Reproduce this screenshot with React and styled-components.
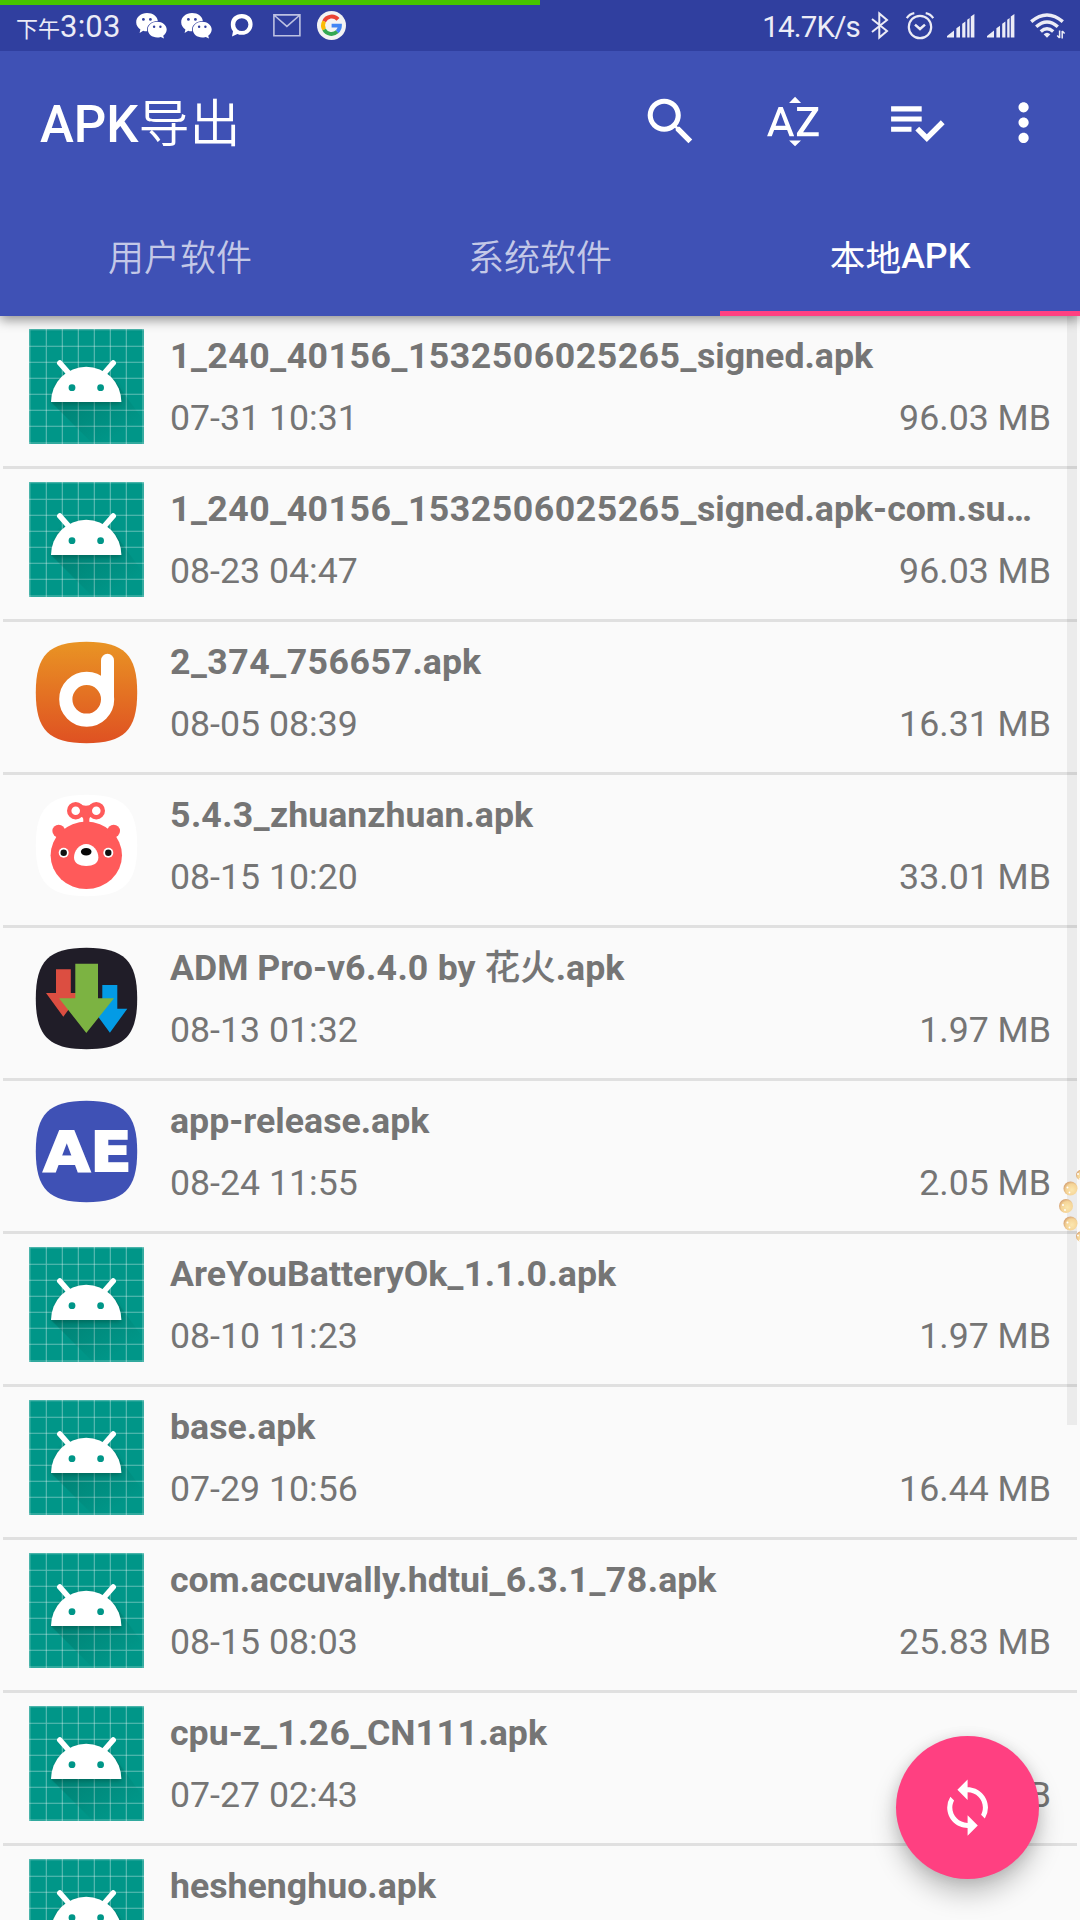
import React from "react";
import styled, { createGlobalStyle } from "styled-components";
import { MdSearch, MdSortByAlpha, MdMoreVert, MdLoop } from "react-icons/md";

const GlobalStyle = createGlobalStyle`
  * { box-sizing: border-box; }
  html, body { margin: 0; padding: 0; background: #fafafa; }
  body { overflow: hidden; }
`;

const Screen = styled.div`
  position: relative;
  width: 1080px;
  height: 1920px;
  overflow: hidden;
  background: #fafafa;
  color: #757575;
  font-family: Roboto, "Noto Sans CJK SC", sans-serif;
  display: flex;
  flex-direction: column;
`;

const Header = styled.header`
  position: relative;
  z-index: 1;
  flex: none;
  background: #3f51b5;
  color: #fff;
  box-shadow: 0 4px 11px rgba(0, 0, 0, 0.42);
`;

const StatusBar = styled.div`
  height: 51px;
  padding: 0 15px 0 16px;
  background: #303f9f;
  color: #ececf6;
  display: flex;
  justify-content: space-between;
`;

const DownloadProgress = styled.div`
  position: absolute;
  top: 0;
  left: 0;
  width: 540px;
  height: 5px;
  background: #46c300;
`;

const StatusGroup = styled.div`
  display: flex;
  align-items: center;
  height: 51px;
`;

const StatusIcon = styled.svg`
  display: block;
  flex: none;
  width: ${(p) => p.$w}px;
  height: ${(p) => p.$h || 28}px;
  margin-left: ${(p) => p.$gap}px;
  overflow: visible;
`;

const Clock = styled.div`
  width: 106px;
  display: flex;
  align-items: baseline;
  font-size: 31px;
  line-height: 36px;
  letter-spacing: 0.2px;
  margin-top: 2px;
  white-space: nowrap;
`;

const Meridiem = styled.span`
  font-family: "Noto Sans CJK SC", sans-serif;
  font-size: 22px;
  font-weight: 400;
  letter-spacing: 0;
`;

const NetSpeed = styled.div`
  font-size: 29.5px;
  line-height: 36px;
  margin-top: 2px;
  letter-spacing: -0.8px;
`;

const Toolbar = styled.div`
  height: 143px;
  padding: 0 10px 0 40px;
  display: flex;
  align-items: center;
`;

const Title = styled.h1`
  flex: 1;
  margin: 0;
  padding-top: 4px;
  font-size: 51px;
  line-height: 60px;
  font-weight: 500;
  white-space: nowrap;
`;

const Han = styled.span`
  font-family: "Noto Sans CJK SC", sans-serif;
  font-weight: ${(p) => p.$weight || 400};
  line-height: 1;
`;

const Actions = styled.div`
  display: flex;
  align-items: center;
`;

const Action = styled.button`
  width: ${(p) => p.$w || 123}px;
  height: 122px;
  padding: 0;
  border: 0;
  background: none;
  color: #fff;
  display: flex;
  align-items: center;
  justify-content: center;
  svg { width: 61.2px; height: 61.2px; flex: none; margin-bottom: ${(p) => p.$lift || 0}px; }
`;

const Tabs = styled.nav`
  height: 122px;
  display: grid;
  grid-template-columns: repeat(3, 1fr);
`;

const Tab = styled.div`
  display: flex;
  align-items: center;
  justify-content: center;
  padding-top: ${(p) => (p.$active ? 7 : 0)}px;
  padding-bottom: ${(p) => (p.$active ? 0 : 1)}px;
  border-bottom: ${(p) => (p.$active ? "5px solid #ff4081" : "0")};
  color: ${(p) => (p.$active ? "#fff" : "rgba(255,255,255,0.7)")};
  font-size: ${(p) => (p.$active ? 35.7 : 36)}px;
  font-weight: 500;
  line-height: 42px;
`;

const List = styled.main`
  position: relative;
  flex: 1;
  min-height: 0;
  overflow: hidden;
  padding: 0 3px;
`;

const Row = styled.article`
  height: 153px;
  padding: 13px 26px 0 26px;
  border-bottom: 3px solid #e0e0e0;
  display: flex;
  gap: 26px;
`;

const AppIcon = styled.svg`
  display: block;
  flex: none;
  width: 115px;
  height: 115px;
`;

const Info = styled.div`
  flex: 1;
  min-width: 0;
  padding-top: 6px;
  display: flex;
  flex-direction: column;
  gap: 20px;
`;

const FileName = styled.div`
  font-size: 35.7px;
  line-height: 42px;
  height: 42px;
  font-weight: 700;
  white-space: nowrap;
`;

const Digits = styled.span`
  letter-spacing: 0.5px;
`;

const Meta = styled.div`
  display: flex;
  justify-content: space-between;
  font-size: 35.7px;
  line-height: 42px;
`;

const ScrollThumb = styled.div`
  position: absolute;
  top: 0;
  right: 3px;
  width: 10px;
  height: 1109px;
  background: rgba(0, 0, 0, 0.06);
`;

const Beads = styled.svg`
  position: absolute;
  right: 0;
  top: 1165px;
  width: 24px;
  height: 82px;
`;

const Fab = styled.button`
  position: absolute;
  right: 41px;
  bottom: 41px;
  width: 143px;
  height: 143px;
  padding: 0;
  border: 0;
  border-radius: 50%;
  background: #ff4081;
  color: #fff;
  box-shadow: 0 15px 26px rgba(0, 0, 0, 0.22), 0 2px 14px rgba(0, 0, 0, 0.12);
  display: flex;
  align-items: center;
  justify-content: center;
  svg { width: 61.2px; height: 61.2px; }
`;

const squircle =
  "M57.5 6.8C95 6.8 108.2 20 108.2 57.5C108.2 95 95 108.2 57.5 108.2C20 108.2 6.8 95 6.8 57.5C6.8 20 20 6.8 57.5 6.8Z";

const gridLines = [0.8, 17.3, 33.3, 49.3, 65.3, 81.3, 97.3, 114];

function AndroidIcon({ id }) {
  return (
    <AppIcon viewBox="0 0 115 115">
      <defs>
        <linearGradient id={`long${id}`} gradientUnits="userSpaceOnUse" x1="45" y1="55" x2="80" y2="112">
          <stop offset="0" stopColor="#004d40" stopOpacity="0.3" />
          <stop offset="1" stopColor="#004d40" stopOpacity="0" />
        </linearGradient>
        <filter id={`soft${id}`} x="-20%" y="-20%" width="140%" height="150%">
          <feGaussianBlur stdDeviation="2.6" />
        </filter>
      </defs>
      <rect width="115" height="115" fill="#009688" />
      {gridLines.map((n) => (
        <path key={n} d={`M${n} 0V115M0 ${n}H115`} stroke="#fff" strokeOpacity="0.38" strokeWidth="1.1" />
      ))}
      <path d="M22 73L64 115H115V92L86 52Z" fill={`url(#long${id})`} />
      <path d="M23 75A34 35 0 0 1 92 75Z" fill="#00382f" opacity="0.4" filter={`url(#soft${id})`} />
      <path d="M22 73A35.2 35.3 0 0 1 92.4 73Z" fill="#fff" />
      <path d="M30.8 34L40 44.5M84.2 34L75 44.5" stroke="#fff" strokeWidth="5.6" strokeLinecap="round" />
      <circle cx="43" cy="58.7" r="3.4" fill="#009688" />
      <circle cx="71.6" cy="58.7" r="3.4" fill="#009688" />
    </AppIcon>
  );
}

function DIcon() {
  return (
    <AppIcon viewBox="0 0 115 115">
      <defs>
        <linearGradient id="orange" x1="0" y1="0" x2="0" y2="1">
          <stop offset="0" stopColor="#e99424" />
          <stop offset="1" stopColor="#df5122" />
        </linearGradient>
      </defs>
      <path d={squircle} fill="url(#orange)" />
      <circle cx="57.7" cy="64.3" r="20.9" fill="none" stroke="#fff" strokeWidth="13.2" />
      <path d="M78.5 25.3V64.3" stroke="#fff" strokeWidth="13" strokeLinecap="round" />
    </AppIcon>
  );
}

function BearIcon() {
  return (
    <AppIcon viewBox="0 0 115 115">
      <path d={squircle} fill="#fff" />
      <g fill="#ff5a5a">
        <ellipse cx="57.3" cy="67.3" rx="35.7" ry="33.7" />
        <circle cx="29.7" cy="43" r="6.3" />
        <circle cx="84.7" cy="43" r="6.3" />
        <path d="M29 47L35 42L42 40L33 52ZM85.6 47L79.6 42L72.6 40L81.6 52Z" />
        <path d="M50 16Q57 19.5 64 16V29Q60.3 28 60.3 32V38H54.3V32Q54.3 28 50 29Z" />
      </g>
      <circle cx="46.7" cy="22.7" r="6.5" fill="#fff" stroke="#ff5a5a" strokeWidth="4.4" />
      <circle cx="67.3" cy="22.7" r="6.5" fill="#fff" stroke="#ff5a5a" strokeWidth="4.4" />
      <circle cx="34.7" cy="64.7" r="5" fill="#fff" />
      <circle cx="79.3" cy="64.7" r="5" fill="#fff" />
      <circle cx="34.7" cy="64.7" r="3.2" fill="#111" />
      <circle cx="79.3" cy="64.7" r="3.2" fill="#111" />
      <path d="M57.2 56C64 56 69.4 62.5 69.4 69.5C69.4 75.5 64 77.9 57.2 77.9C50.4 77.9 45 75.5 45 69.5C45 62.5 50.4 56 57.2 56Z" fill="#fff" />
      <ellipse cx="57.2" cy="63.7" rx="5.3" ry="3.8" fill="#080808" />
    </AppIcon>
  );
}

function ArrowsIcon() {
  return (
    <AppIcon viewBox="0 0 115 115">
      <path d={squircle} fill="#201d28" />
      <path d="M27 28.3H41.8V52H51.7L34.3 75.7L17 52H27Z" fill="#dc4e41" />
      <path d="M73.3 44H88.3V67.7H98.3L80.9 91.7L63.3 67.7H73.3Z" fill="#039be5" />
      <path d="M46.3 22.7H69V57.3H85L57.3 91.9L30 57.3H46.3Z" fill="#7cb342" />
    </AppIcon>
  );
}

function AeIcon() {
  return (
    <AppIcon viewBox="0 0 115 115">
      <path d={squircle} fill="#3f51b5" />
      <text x="14.2" y="77.1" fill="#fff" stroke="#fff" strokeWidth="1.8" fontFamily="DejaVu Sans, sans-serif" fontWeight="700" fontSize="55.2" textLength="88.5" lengthAdjust="spacingAndGlyphs">
        AE
      </text>
    </AppIcon>
  );
}

function WeChat({ gap }) {
  return (
    <StatusIcon $w={31} $h={26} $gap={gap} viewBox="0 0 31 26">
      <path d="M11 0C17 0 21.4 3.5 21.8 8C15.5 8.2 11 12 11 16.6L11.2 18.3C9.8 18.4 8.4 18.2 7.2 17.8L3.6 20L4.4 16.4C1.8 14.8.2 12.2.2 9.2C.2 4 5 0 11 0Z" fill="#fff" />
      <path d="M21.2 8.7C26.4 8.7 30.7 12.2 30.7 16.6C30.7 19.2 29.2 21.4 27.2 22.8L28 25.6L24.8 24C23.6 24.4 22.4 24.6 21.2 24.6C16 24.6 11.8 21 11.8 16.6C11.8 12.2 16 8.7 21.2 8.7Z" fill="#fff" />
      <g fill="#303f9f">
        <circle cx="7.4" cy="6.4" r="1.4" />
        <circle cx="14.4" cy="6.4" r="1.4" />
        <circle cx="18.1" cy="13.7" r="1.2" />
        <circle cx="24.4" cy="13.7" r="1.2" />
      </g>
    </StatusIcon>
  );
}

function Signal({ gap }) {
  return (
    <StatusIcon $w={28} $h={24} $gap={gap} viewBox="0 0 28 24">
      <path d="M0 23.6V22L7 16.6V23.6ZM9.4 23.6V14.2L13 11.7V23.6ZM15.2 23.6V9.8L18.4 7.4V23.6ZM20.2 23.6V5.8L22.6 4V23.6ZM23.8 23.6V2.4L27.4 0V23.6Z" fill="#ececf6" />
    </StatusIcon>
  );
}

const files = [
  { icon: "android", name: "1_240_40156_1532506025265_signed.apk", date: "07-31 10:31", size: "96.03 MB" },
  { icon: "android", name: "1_240_40156_1532506025265_signed.apk-com.su…", date: "08-23 04:47", size: "96.03 MB" },
  { icon: "d", name: "2_374_756657.apk", date: "08-05 08:39", size: "16.31 MB" },
  { icon: "bear", name: "5.4.3_zhuanzhuan.apk", date: "08-15 10:20", size: "33.01 MB" },
  { icon: "arrows", name: "ADM Pro-v6.4.0 by 花火.apk", date: "08-13 01:32", size: "1.97 MB" },
  { icon: "ae", name: "app-release.apk", date: "08-24 11:55", size: "2.05 MB" },
  { icon: "android", name: "AreYouBatteryOk_1.1.0.apk", date: "08-10 11:23", size: "1.97 MB" },
  { icon: "android", name: "base.apk", date: "07-29 10:56", size: "16.44 MB" },
  { icon: "android", name: "com.accuvally.hdtui_6.3.1_78.apk", date: "08-15 08:03", size: "25.83 MB" },
  { icon: "android", name: "cpu-z_1.26_CN111.apk", date: "07-27 02:43", size: "MB" },
  { icon: "android", name: "heshenghuo.apk" },
];

const icons = { android: AndroidIcon, d: DIcon, bear: BearIcon, arrows: ArrowsIcon, ae: AeIcon };

// Digits get slightly looser tracking, Han characters a lighter weight.
function renderName(name) {
  return name.split(/([\d_]+|[\u4e00-\u9fff]+)/).map((part, i) => {
    if (/^[\d_]/.test(part)) return <Digits key={i}>{part}</Digits>;
    if (/^[\u4e00-\u9fff]/.test(part)) return <Han key={i} $weight={500}>{part}</Han>;
    return part;
  });
}

function FileRow({ file, index }) {
  const Icon = icons[file.icon];
  return (
    <Row>
      <Icon id={index} />
      <Info>
        <FileName>{renderName(file.name)}</FileName>
        {file.date && (
          <Meta>
            <span>{file.date}</span>
            <span>{file.size}</span>
          </Meta>
        )}
      </Info>
    </Row>
  );
}

export default function App() {
  return (
    <Screen>
      <GlobalStyle />
      <Header>
        <StatusBar>
          <StatusGroup>
            <Clock><Meridiem>下午</Meridiem>3:03</Clock>
            <WeChat gap={14} />
            <WeChat gap={14} />
            <StatusIcon $w={23} $h={24} $gap={18} viewBox="0 0 23 24">
              <path fillRule="evenodd" fill="#fff" d="M11.8 0C18.2 0 22.6 4.2 22.6 10.2C22.6 16.4 18 20.8 11.8 20.8C10.2 20.8 8.6 20.5 7.4 19.9L2 22.5L3 17.3C1.4 15.5.8 13 .8 10.2C.8 4.2 5.4 0 11.8 0ZM11.8 4.2A6.6 6.4 0 1 0 11.8 17A6.6 6.4 0 1 0 11.8 4.2Z" />
            </StatusIcon>
            <StatusIcon $w={28} $h={23} $gap={20} viewBox="0 0 28 23">
              <path d="M.9.9H26.9V21.7H.9ZM1.5 1.5L13.9 12.4L26.3 1.5" fill="none" stroke="#bdc1e2" strokeWidth="1.6" />
            </StatusIcon>
            <StatusIcon $w={29} $h={29} $gap={16} viewBox="0 0 29 29">
              <circle cx="14.5" cy="14.5" r="14.5" fill="#f3f3f3" />
              <g fill="none" strokeWidth="3.9">
                <path d="M21 8.4A8.4 8.4 0 0 0 7.1 10.4" stroke="#ea4335" />
                <path d="M7.1 10.4A8.4 8.4 0 0 0 7.1 18.6" stroke="#fbbc05" />
                <path d="M7.1 18.6A8.4 8.4 0 0 0 20.2 20.7" stroke="#34a853" />
                <path d="M20.2 20.7A8.4 8.4 0 0 0 22.9 14.6H14.6" stroke="#4285f4" />
              </g>
            </StatusIcon>
          </StatusGroup>
          <StatusGroup>
            <NetSpeed>14.7K/s</NetSpeed>
            <StatusIcon $w={18} $h={27} $gap={11} viewBox="0 0 18 27">
              <path d="M1 7L16 19L8.3 25.6V1.4L16 8L1 20" fill="none" stroke="#ececf6" strokeWidth="2" />
            </StatusIcon>
            <StatusIcon $w={28} $h={27} $gap={17} viewBox="0 0 28 27">
              <g fill="none" stroke="#ececf6" strokeWidth="2.2">
                <circle cx="14" cy="15" r="11.2" />
                <path d="M9 12.6L14 17L19 12.6" strokeWidth="2.5" />
                <path d="M.8 6.2Q3.5 2 8.3 1.2M27.2 6.2Q24.5 2 19.7 1.2" />
              </g>
            </StatusIcon>
            <Signal gap={13} />
            <Signal gap={12} />
            <StatusIcon $w={35} $h={26} $gap={15} viewBox="0 0 35 26">
              <g fill="none" stroke="#ececf6" strokeWidth="3.4">
                <path d="M1.2 8.6Q17 -4.8 32.8 8.6" />
                <path d="M6.2 13.8Q17 4.2 27.8 13.8" />
                <path d="M10.8 18.4Q17 12.9 23.2 18.4" />
                <path d="M29.6 17.6V25M27.2 22.4L29.6 25M32.2 25.4V18M32.2 18L34.6 20.6" strokeWidth="1.5" />
              </g>
              <path d="M13.6 21.2Q17 18.2 20.4 21.2L17 24.8Z" fill="#ececf6" />
            </StatusIcon>
          </StatusGroup>
          <DownloadProgress />
        </StatusBar>
        <Toolbar>
          <Title>APK<Han $weight={350}>导出</Han></Title>
          <Actions>
            <Action $lift={1}><MdSearch /></Action>
            <Action $lift={1}><MdSortByAlpha /></Action>
            <Action $lift={1}>
              <svg viewBox="0 0 24 24" fill="currentColor">
                <path d="M14 10H2v2h12v-2zm0-4H2v2h12V6zM2 16h8v-2H2v2zm19.5-4.5L23 13l-6.99 7-4.51-4.5L13 14l3.01 3 5.49-5.5z" />
              </svg>
            </Action>
            <Action $w={92}><MdMoreVert /></Action>
          </Actions>
        </Toolbar>
        <Tabs>
          <Tab><Han $weight={350}>用户软件</Han></Tab>
          <Tab><Han $weight={350}>系统软件</Han></Tab>
          <Tab $active><Han>本地</Han>APK</Tab>
        </Tabs>
      </Header>
      <List>
        {files.map((file, i) => (
          <FileRow key={i} file={file} index={i} />
        ))}
        <ScrollThumb />
      </List>
      <Beads viewBox="0 0 24 82">
        <defs>
          <radialGradient id="bead" cx="0.6" cy="0.6" r="0.6">
            <stop offset="0" stopColor="#fbe6ae" />
            <stop offset="0.7" stopColor="#f5d497" />
            <stop offset="1" stopColor="#d9a878" />
          </radialGradient>
        </defs>
        {[[25, 10, 5], [14.5, 23.5, 7], [10, 41, 7], [14.5, 58.5, 7], [25, 71.5, 5]].map(([x, y, r]) => (
          <g key={y}>
            <circle cx={x} cy={y} r={r} fill="url(#bead)" />
            <circle cx={x - 3} cy={y - 1} r="1" fill="#fff" />
            <circle cx={x - 1} cy={y + 4} r="0.9" fill="#fff" />
          </g>
        ))}
      </Beads>
      <Fab><MdLoop /></Fab>
    </Screen>
  );
}
